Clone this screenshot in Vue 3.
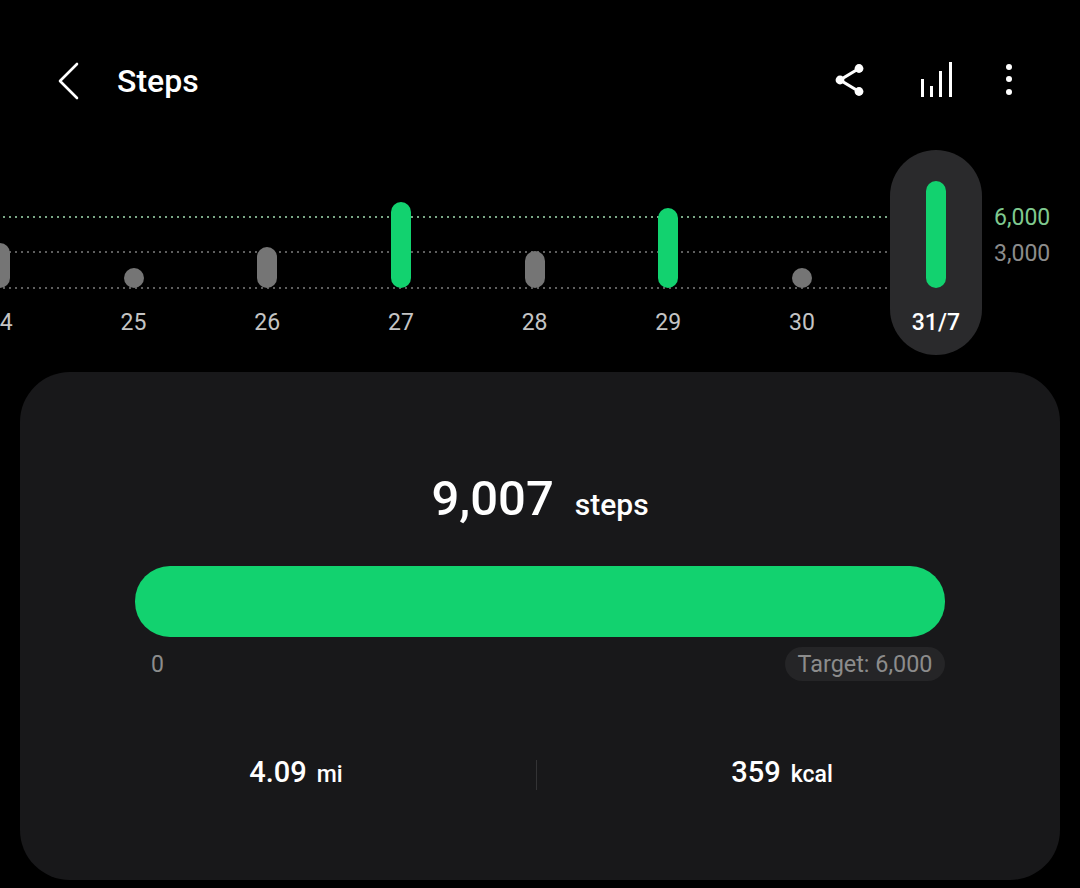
<script setup>
const days = [
  { label: '24', height: 45, green: false },
  { label: '25', height: 20, green: false },
  { label: '26', height: 41, green: false },
  { label: '27', height: 86, green: true },
  { label: '28', height: 37, green: false },
  { label: '29', height: 80, green: true },
  { label: '30', height: 20, green: false },
  { label: '31/7', height: 107, green: true, active: true }
]
</script>

<template>
  <div class="page">
    <header class="topbar">
      <svg class="back" width="24" height="40" viewBox="0 0 24 40">
        <path d="M20 3 L3 20 L20 37" fill="none" stroke="#fff" stroke-width="2.6" stroke-linecap="round" stroke-linejoin="round" />
      </svg>
      <h1 class="title">Steps</h1>
      <div class="actions">
        <svg class="share" width="32" height="34" viewBox="0 0 32 34">
          <path d="M25 5.5 L6 17 L25 28.5" fill="none" stroke="#fff" stroke-width="3.2" />
          <circle cx="25" cy="5.5" r="4.4" fill="#fff" />
          <circle cx="6" cy="17" r="4.4" fill="#fff" />
          <circle cx="25" cy="28.5" r="4.4" fill="#fff" />
        </svg>
        <svg class="levels" width="32" height="36" viewBox="0 0 32 36">
          <rect x="0" y="17" width="3" height="18" fill="#fff" />
          <rect x="9" y="24" width="3" height="11" fill="#fff" />
          <rect x="18" y="9" width="3" height="26" fill="#fff" />
          <rect x="28" y="0" width="3" height="35" fill="#fff" />
        </svg>
        <div class="more">
          <span></span>
          <span></span>
          <span></span>
        </div>
      </div>
    </header>

    <section class="chart">
      <div class="gridline goal"></div>
      <div class="gridline mid"></div>
      <div class="gridline base"></div>

      <div v-for="day in days" :key="day.label" class="day" :class="{ active: day.active }">
        <div class="track">
          <div class="bar" :class="{ green: day.green }" :style="{ height: day.height + 'px' }"></div>
        </div>
        <span class="day-label">{{ day.label }}</span>
      </div>

      <span class="axis goal-label">6,000</span>
      <span class="axis mid-label">3,000</span>
    </section>

    <section class="card">
      <div class="total">
        <span class="total-value">9,007</span>
        <span class="total-unit">steps</span>
      </div>
      <div class="progress"></div>
      <div class="scale">
        <span class="zero">0</span>
        <span class="target">Target: 6,000</span>
      </div>
      <div class="stats">
        <div class="stat">
          <span class="stat-value">4.09</span>
          <span class="stat-unit">mi</span>
        </div>
        <div class="divider"></div>
        <div class="stat">
          <span class="stat-value">359</span>
          <span class="stat-unit">kcal</span>
        </div>
      </div>
    </section>
  </div>
</template>

<style>
body {
  background: #000;
}
</style>

<style scoped>
.page {
  width: 1080px;
  height: 888px;
  overflow: hidden;
  background: #000;
  font-family: Roboto, "Liberation Sans", sans-serif;
  color: #fff;
}

.topbar {
  height: 150px;
  box-sizing: border-box;
  padding: 61px 0 0 57px;
  display: flex;
  align-items: flex-start;
}

.back {
  display: block;
}

.title {
  margin: 0 0 0 36px;
  font-size: 32px;
  line-height: 40px;
  font-weight: 500;
}

.actions {
  margin-left: auto;
  display: flex;
  align-items: flex-start;
}

.share {
  margin-top: 1.5px;
}

.levels {
  margin-left: 55px;
  margin-top: 1px;
}

.more {
  margin-left: 52.7px;
  margin-right: 68.3px;
  margin-top: 3px;
  display: flex;
  flex-direction: column;
  gap: 6.3px;
}

.more span {
  width: 6px;
  height: 6px;
  border-radius: 50%;
  background: #fff;
}

.chart {
  position: relative;
  height: 205px;
  margin-left: -67px;
  display: flex;
}

.gridline {
  position: absolute;
  left: 4px;
  width: 950px;
  height: 2px;
  background-image: repeating-linear-gradient(90deg, #5e5e5e 0 2px, transparent 2px 6px);
}

.gridline.goal {
  top: 66px;
  background-image: repeating-linear-gradient(90deg, #7aa886 0 2px, transparent 2px 6px);
}

.gridline.mid {
  top: 101px;
}

.gridline.base {
  top: 137px;
}

.day {
  position: relative;
  width: 133.7px;
  height: 205px;
  display: flex;
  flex-direction: column;
  align-items: center;
}

.day.active {
  width: 92px;
  margin-left: 21.1px;
  background: #2a2a2c;
  border-radius: 46px;
}

.track {
  height: 138px;
  display: flex;
  align-items: flex-end;
}

.bar {
  width: 20px;
  border-radius: 10px;
  background: #757575;
}

.bar.green {
  background: #12d26f;
}

.day-label {
  margin-top: 21px;
  font-size: 23px;
  line-height: 27px;
  color: #c4c4c4;
}

.day.active .day-label {
  font-weight: 500;
  color: #fff;
}

.axis {
  position: absolute;
  left: 1061px;
  font-size: 23px;
  line-height: 27px;
}

.goal-label {
  top: 54px;
  color: #7fc98f;
}

.mid-label {
  top: 90px;
  color: #8c8c8c;
}

.card {
  margin: 17px 20px 0;
  height: 508px;
  box-sizing: border-box;
  padding-top: 97px;
  background: #18181a;
  border-radius: 50px;
}

.total {
  display: flex;
  justify-content: center;
  align-items: baseline;
  gap: 21px;
  height: 60px;
  line-height: 60px;
}

.total-value {
  font-size: 49px;
  font-weight: 500;
}

.total-unit {
  font-size: 30px;
  font-weight: 500;
}

.progress {
  margin: 37px 115px 0;
  height: 71px;
  border-radius: 35px;
  background: #12d26f;
}

.scale {
  margin: 10px 115px 0;
  display: flex;
  justify-content: space-between;
  align-items: center;
}

.zero {
  margin-left: 16px;
  font-size: 23px;
  color: #8c8c8c;
}

.target {
  padding: 0 12.5px;
  height: 34px;
  line-height: 34px;
  border-radius: 17px;
  background: #252527;
  font-size: 23.4px;
  color: #8c8c8c;
}

.stats {
  margin: 79px 0 0 36px;
  display: grid;
  grid-template-columns: 480px 1px 490px;
}

.stat {
  display: flex;
  justify-content: center;
  align-items: baseline;
  align-self: start;
  gap: 10px;
  line-height: 24px;
}

.stat-value {
  font-size: 29px;
  font-weight: 500;
}

.stat-unit {
  font-size: 23px;
  font-weight: 500;
}

.divider {
  width: 1px;
  height: 30px;
  background: #333335;
}
</style>
